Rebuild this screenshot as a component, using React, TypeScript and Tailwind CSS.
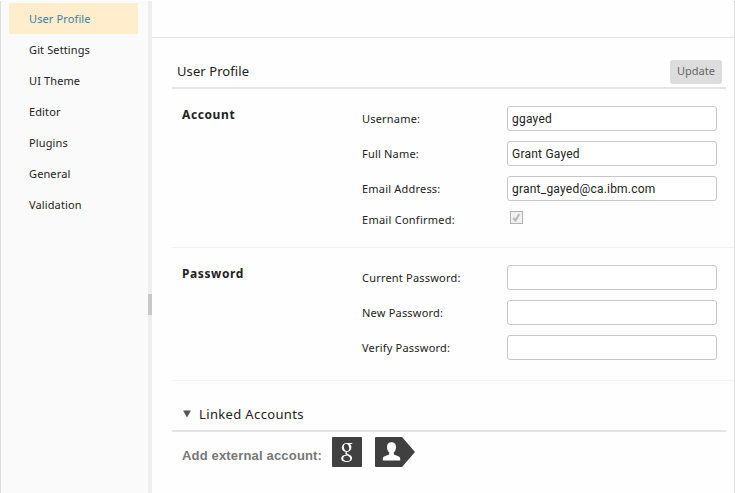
import React from "react";

const navItems = ["User Profile", "Git Settings", "UI Theme", "Editor", "Plugins", "General", "Validation"];

function Sidebar() {
  return (
    <nav className="flex w-[147px] shrink-0 flex-col bg-[#fafafa] pl-2 pt-0.5">
      {navItems.map((label, i) => (
        <a
          key={label}
          className={`block h-[31px] w-[129px] pl-5 text-[11px] leading-[31px] tracking-[0.12px] whitespace-nowrap ${
            i === 0 ? "bg-[#ffedcc] text-[#3d80a8]" : "text-[#222]"
          }`}
        >
          {label}
        </a>
      ))}
    </nav>
  );
}

function Field({ label, value = "", type = "text" }: { label: string; value?: string; type?: string }) {
  return (
    <label className="flex h-[25px] items-center">
      <span className="w-[145px] pt-0.5 text-[11px] tracking-[0.2px] text-[#222]">{label}</span>
      <input
        type={type}
        defaultValue={value}
        className="h-[25px] w-[210px] rounded-[3px] border border-[#c7c7c7] bg-white px-1 pt-px font-[Roboto,sans-serif] text-[12px] tracking-[0.22px] text-[#222] outline-none"
      />
    </label>
  );
}

function Section({ title, className, children }: { title: string; className: string; children: React.ReactNode }) {
  return (
    <section className={`flex border-b border-[#f3f3f3] pl-2.5 ${className}`}>
      <h2 className="h-[18px] w-[180px] shrink-0 text-[12px] font-bold leading-[18px] tracking-[0.6px] text-[#222]">
        {title}
      </h2>
      <div className="flex flex-col gap-2.5">{children}</div>
    </section>
  );
}

function GoogleButton() {
  return (
    <button className="h-[30px] w-[30px]" aria-label="Google">
      <svg width="30" height="30" viewBox="0 0 30 30">
        <rect width="30" height="30" rx="1" fill="#404040" />
        <g fill="#fff" fillRule="evenodd">
          <path d="M14.7 6H20.8L19.6 7.1H17.8C18.8 7.8 19.4 9 19.4 10.4C19.4 13.3 17.3 14.9 14.3 14.9C11.4 14.9 9.8 12.9 9.8 10.6C9.8 8 11.8 6 14.7 6ZM14.2 6.8C12.7 6.8 11.9 8 11.9 9.7C11.9 12 13.1 14.1 14.9 14.1C16.4 14.1 17.2 13 17.2 11.4C17.2 9.1 16 6.8 14.2 6.8Z" />
          <path d="M14.2 14.4H15.4C14.6 15.3 14.4 15.8 15.1 16.4L18.3 18.2C19.7 19.1 20.1 20 20.1 21.2C20.1 23.5 18 25 14.6 25C11.3 25 9.2 23.7 9.2 21.6C9.2 19.2 11.4 17.9 14.6 17.8C13 16.8 12.8 15.7 14.2 14.4ZM15.3 18.4C12.6 18.5 11.2 19.5 11.2 21.2C11.2 23 12.8 24.1 15.1 24.1C17.2 24.1 18.3 23.2 18.3 21.8C18.3 20.4 17.1 19.5 15.3 18.4Z" />
        </g>
      </svg>
    </button>
  );
}

function PersonaButton() {
  return (
    <button className="ml-[13px] h-[30px] w-10" aria-label="Persona">
      <svg width="40" height="30" viewBox="0 0 40 30">
        <path d="M1 0h26L40 15 27 30H1a1 1 0 0 1-1-1V1a1 1 0 0 1 1-1Z" fill="#404040" />
        <path d="M16.5 5.3c3 0 4.5 1.8 4.5 4.7 0 2.5-.9 4.5-2.2 5.6v1.5c0 1.5 6.4 1.6 6.4 4.6v1.8H7.8v-1.8c0-3 6.4-3.1 6.4-4.6v-1.5C12.900 14.500 12 12.500 12 10c0-2.900 1.500-4.700 4.500-4.700Z" fill="#fff" />
      </svg>
    </button>
  );
}

export default function App() {
  return (
    <div className="h-[493px] w-[735px] bg-white pt-px font-['Noto_Sans',sans-serif]">
      <div className="flex h-full border-x border-[#ddd]">
        <Sidebar />
        <div className="flex w-1 shrink-0 flex-col bg-[#eee] pt-[293px]">
          <div className="h-[21px] bg-[#c8c8c8]" />
        </div>
        <main className="min-w-0 flex-1 bg-[#fefefe]">
          <div className="h-[37px] border-b border-[#e5e5e5]" />
          <div className="pl-5">
            <header className="mr-2 flex h-[51px] items-start justify-between border-b-2 border-[#e4e4e4] pl-[5px] pr-1 pt-[22px]">
              <h1 className="text-[13px] leading-[23px] tracking-[0.08px] text-[#222]">User Profile</h1>
              <button className="h-6 w-[52px] rounded-[3px] bg-[#ddd] pb-0.5 text-[11px] text-[#666]">Update</button>
            </header>
            <Section title="Account" className="h-[159px] pt-[17px]">
              <Field label="Username:" value="ggayed" />
              <Field label="Full Name:" value="Grant Gayed" />
              <Field label="Email Address:" value="grant_gayed@ca.ibm.com" />
              <div className="flex">
                <span className="w-[148px] pt-px text-[11px] leading-4 tracking-[0.26px] text-[#222]">
                  Email Confirmed:
                </span>
                <span className="flex h-[13px] w-[13px] items-center justify-center border border-[#b1b1b1] bg-[#f1f1f1]">
                  <svg width="9" height="9" viewBox="0 0 9 9">
                    <path d="M1.300 5 3.400 7.600 7.300 1" fill="none" stroke="#b8b8b8" strokeWidth="2" />
                  </svg>
                </span>
              </div>
            </Section>
            <Section title="Password" className="h-[133px] pt-[17px]">
              <Field label="Current Password:" type="password" />
              <Field label="New Password:" type="password" />
              <Field label="Verify Password:" type="password" />
            </Section>
            <div className="mr-2 flex h-[51px] items-start border-b-2 border-[#e4e4e4] pl-[11px] pt-[22px]">
              <svg className="mt-[7px] mr-2" width="8" height="8" viewBox="0 0 8 8">
                <path d="M0 .5h8L4 7.5Z" fill="#555" />
              </svg>
              <h2 className="text-[13px] leading-[23px] tracking-[0.36px] text-[#222]">Linked Accounts</h2>
            </div>
            <div className="flex items-center pl-2.5 pt-[5px]">
              <span className="w-[150px] whitespace-nowrap pt-[7px] font-['Liberation_Sans',Arial,sans-serif] text-[13px] font-bold leading-5 tracking-[0.17px] text-[#777]">
                Add external account:
              </span>
              <GoogleButton />
              <PersonaButton />
            </div>
          </div>
        </main>
      </div>
    </div>
  );
}
